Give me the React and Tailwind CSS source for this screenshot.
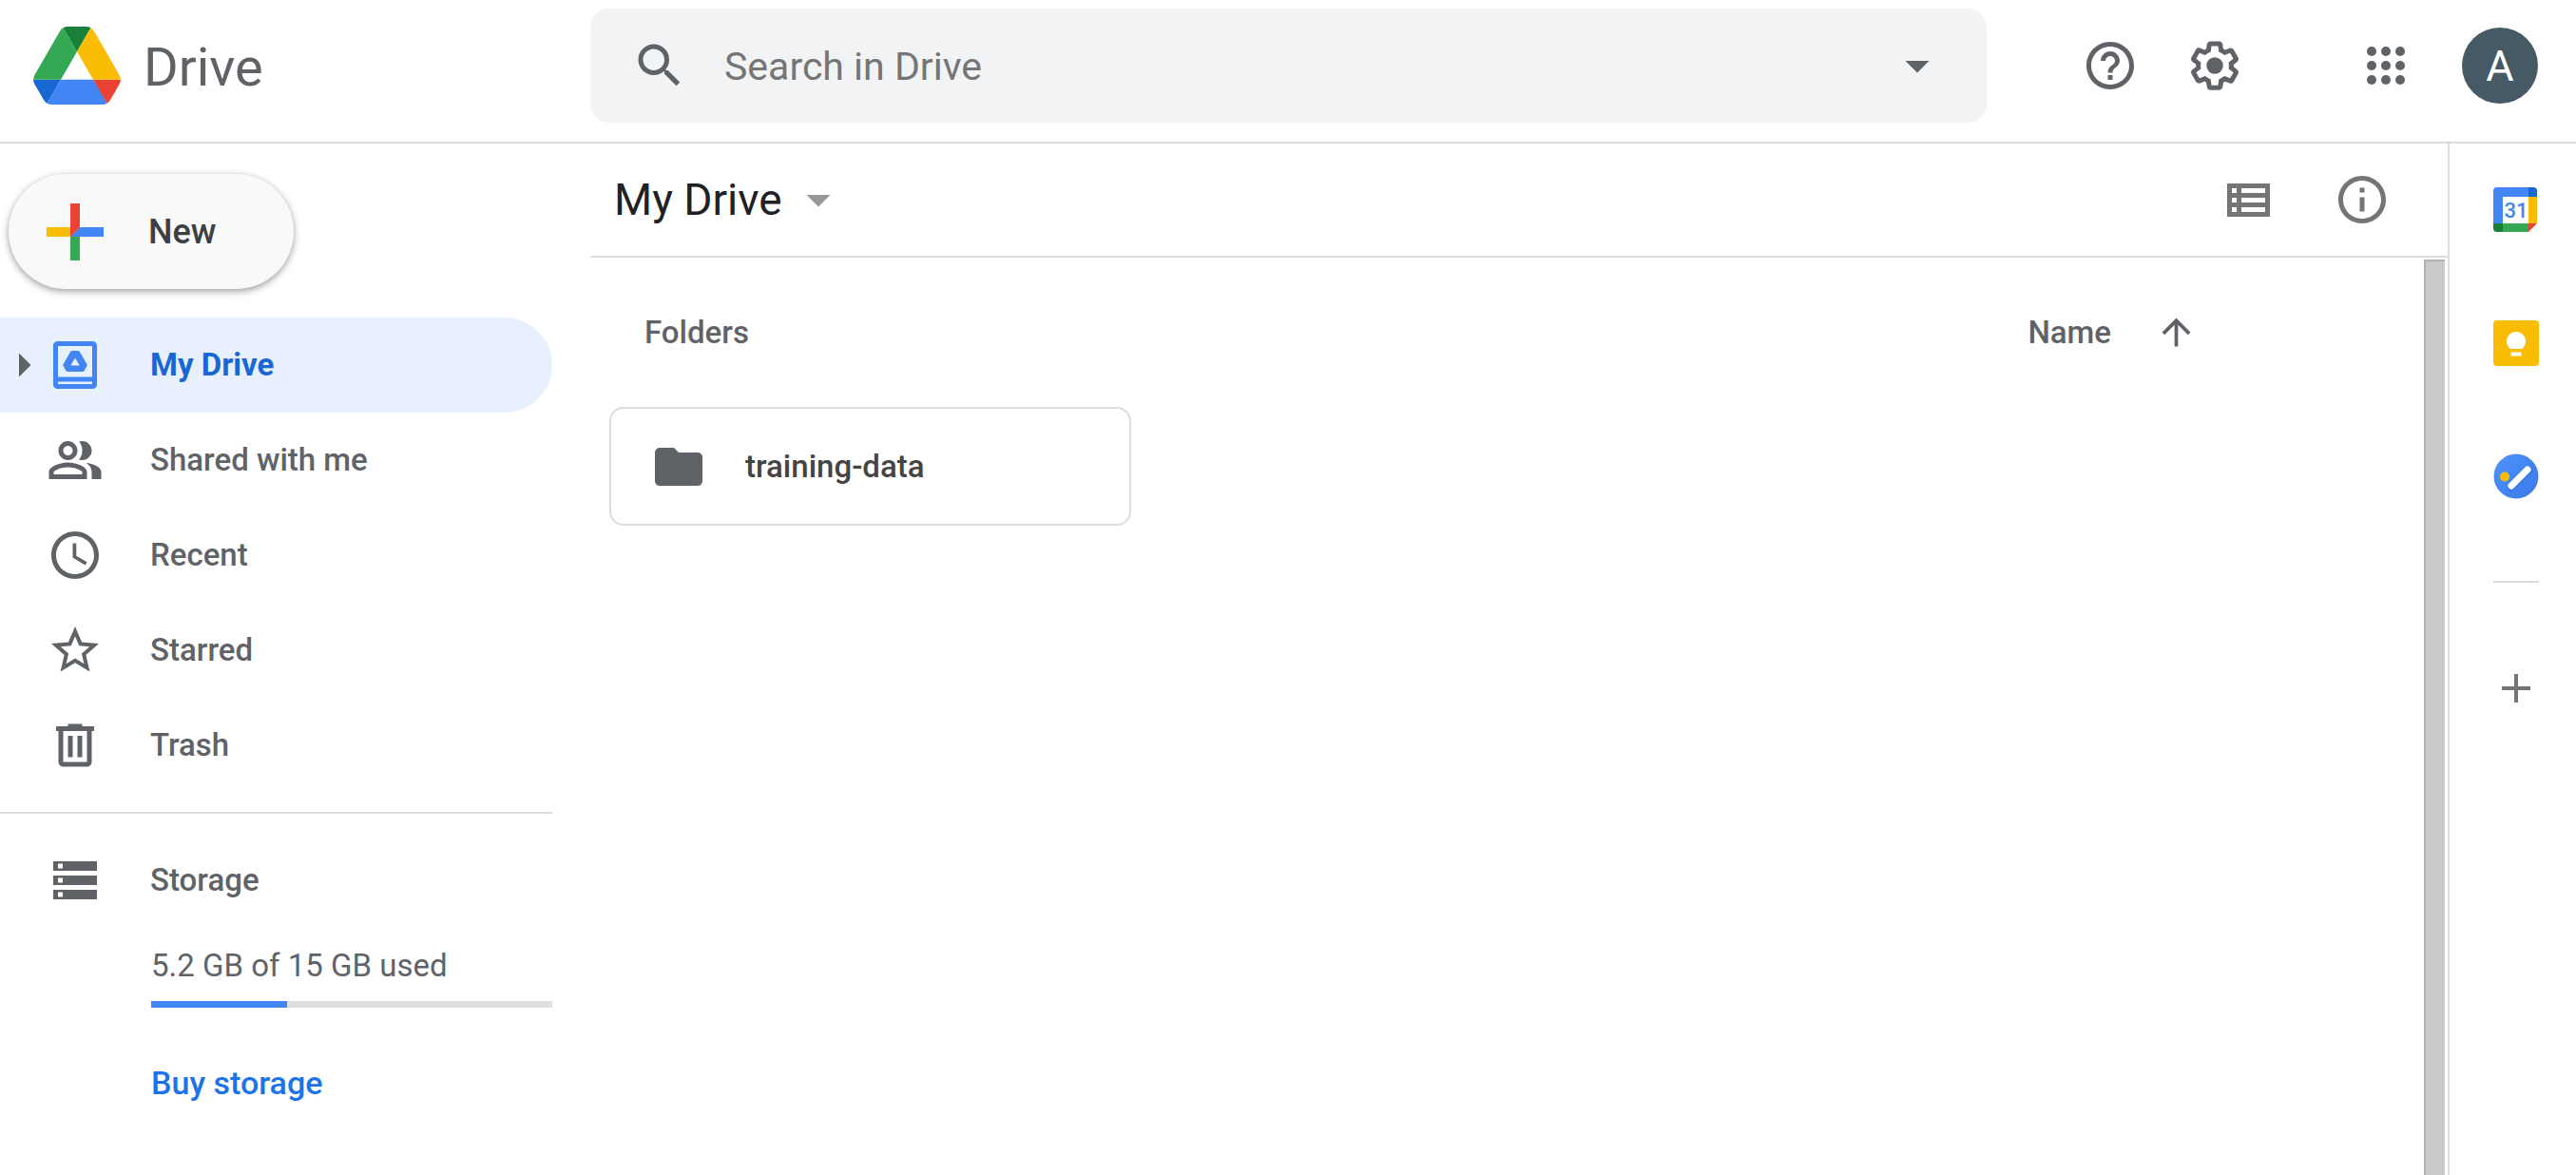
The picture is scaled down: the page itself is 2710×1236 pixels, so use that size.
import { MdSearch, MdHelpOutline, MdArrowDropDown, MdArrowUpward, MdInfoOutline, MdFolder, MdArrowRight } from 'react-icons/md';

function Icon({ children, className = 'size-[60px]', box = '0 0 24 24' }) {
  return (
    <svg viewBox={box} fill="currentColor" aria-hidden="true" className={`block shrink-0 ${className}`}>
      {children}
    </svg>
  );
}

const Logo = () => (
  <svg viewBox="0 0 87.3 78" aria-hidden="true" className="block h-[82px] w-[92px] shrink-0">
    <path d="m6.6 66.85 3.85 6.65c.8 1.4 1.95 2.5 3.3 3.3l13.75-23.8h-27.5c0 1.55.4 3.1 1.2 4.5z" fill="#1967d2" />
    <path d="m43.65 25-13.75-23.8c-1.35.8-2.5 1.9-3.3 3.3l-25.4 44a9.06 9.06 0 0 0 -1.2 4.5h27.5z" fill="#34a853" />
    <path d="m73.55 76.8c1.35-.8 2.5-1.9 3.3-3.3l1.6-2.75 7.65-13.25c.8-1.4 1.2-2.95 1.2-4.5h-27.502l5.852 11.5z" fill="#ea4335" />
    <path d="m43.65 25 13.75-23.8c-1.35-.8-2.9-1.2-4.5-1.2h-18.5c-1.6 0-3.15.45-4.5 1.2z" fill="#188038" />
    <path d="m59.8 53h-32.3l-13.75 23.8c1.35.8 2.9 1.2 4.5 1.2h50.8c1.6 0 3.15-.45 4.5-1.2z" fill="#4285f4" />
    <path d="m73.4 26.5-12.7-22c-.8-1.4-1.95-2.5-3.3-3.3l-13.75 23.8 16.15 28h27.45c0-1.55-.4-3.1-1.2-4.5z" fill="#fbbc04" />
  </svg>
);

const Gear = () => (
  <Icon>
    <path d="M13.85 22.25h-3.7c-.74 0-1.36-.54-1.45-1.27l-.27-1.89c-.27-.14-.53-.29-.79-.46l-1.8.72c-.7.26-1.47-.03-1.81-.65L2.2 15.53c-.35-.66-.2-1.44.36-1.88l1.53-1.19c-.01-.15-.02-.3-.02-.46 0-.15.01-.31.02-.46l-1.52-1.19c-.59-.45-.74-1.26-.37-1.88l1.85-3.19c.34-.62 1.11-.9 1.79-.63l1.81.73c.26-.17.52-.32.78-.46l.27-1.91c.09-.7.71-1.25 1.44-1.25h3.7c.74 0 1.36.54 1.45 1.27l.27 1.89c.27.14.53.29.79.46l1.8-.72c.71-.26 1.48.03 1.82.65l1.84 3.18c.36.66.2 1.44-.36 1.88l-1.52 1.19c.01.15.02.3.02.46s-.01.31-.02.46l1.52 1.19c.56.45.72 1.23.37 1.86l-1.86 3.22c-.34.62-1.11.9-1.8.63l-1.8-.72c-.26.17-.52.32-.78.46l-.27 1.91c-.1.68-.72 1.22-1.46 1.22zm-3.23-2h2.76l.37-2.55.53-.22c.44-.18.88-.44 1.34-.78l.45-.34 2.38.96 1.38-2.4-2.03-1.58.07-.56c.03-.26.06-.51.06-.78s-.03-.53-.06-.78l-.07-.56 2.03-1.58-1.39-2.4-2.39.96-.45-.35c-.42-.32-.87-.58-1.33-.77l-.52-.22-.37-2.55h-2.76l-.37 2.55-.53.21c-.44.19-.88.44-1.34.79l-.45.33-2.38-.95-1.39 2.39 2.03 1.58-.07.56a7 7 0 0 0-.06.79c0 .26.02.53.06.78l.07.56-2.03 1.58 1.38 2.4 2.39-.96.45.35c.43.33.86.58 1.33.77l.53.22.38 2.55z" />
    <circle cx="12" cy="12" r="3.5" />
  </Icon>
);

const AppsGrid = () => (
  <Icon>
    {[6, 12, 18].map((y) => [6, 12, 18].map((x) => <circle key={`${x}-${y}`} cx={x} cy={y} r="2" />))}
  </Icon>
);

const ListView = () => (
  <svg viewBox="0 0 45 35" aria-hidden="true" className="block h-[35px] w-[45px]">
    <path
      fill="currentColor"
      fillRule="evenodd"
      d="M0 0h45v35H0zM5 5v5h5V5zM15 5v5h25V5zM5 15v5h5v-5zM15 15v5h25v-5zM5 25v5h5v-5zM15 25v5h25v-5z"
    />
  </svg>
);

const NewPlus = () => (
  <svg viewBox="0 0 36 36" aria-hidden="true" className="block size-[90px] shrink-0">
    <path fill="#34a853" d="M16 16v14h4V20z" />
    <path fill="#4285f4" d="M30 16H20l-4 4h14z" />
    <path fill="#fbbc05" d="M6 16v4h10l4-4z" />
    <path fill="#ea4335" d="M20 16V6h-4v14z" />
  </svg>
);

const Calendar = () => (
  <svg viewBox="0 0 48 48" aria-hidden="true" className="block size-[48px]">
    <path fill="#fff" d="M10 10h27v28H10z" />
    <path fill="#4285f4" d="M4 0h33v10H10v28H0V4a4 4 0 0 1 4-4z" />
    <path fill="#1967d2" d="M37 0h5a4 4 0 0 1 4 4v6h-9z" />
    <path fill="#fbbc04" d="M37 10h9v28h-9z" />
    <path fill="#34a853" d="M10 38h27v9H10z" />
    <path fill="#188038" d="M0 38h10v9H4a4 4 0 0 1-4-4z" />
    <path fill="#ea4335" d="M37 38h9l-9 9z" />
    <text x="24" y="32" textAnchor="middle" fill="#4285f4" fontSize="22" fontWeight="500" fontFamily="Roboto, sans-serif">31</text>
  </svg>
);

const Keep = () => (
  <svg viewBox="0 0 48 48" aria-hidden="true" className="block size-[48px]">
    <rect width="48" height="48" rx="4" fill="#fbbc04" />
    <path fill="#fff" d="M18 30a10 10 0 1 1 12 0zM18.5 33.5h11v4h-11z" />
  </svg>
);

const Tasks = () => (
  <svg viewBox="0 0 48 48" aria-hidden="true" className="block size-[48px]">
    <defs>
      <linearGradient id="tasksBlue" x1="0" y1="0" x2="1" y2="1">
        <stop offset="0" stopColor="#5394f8" />
        <stop offset="0.5" stopColor="#4285f4" />
        <stop offset="1" stopColor="#3d78e6" />
      </linearGradient>
    </defs>
    <circle cx="24" cy="24" r="23.5" fill="url(#tasksBlue)" />
    <path d="M19 35.500 37 18" stroke="#3367d6" strokeOpacity="0.4" strokeWidth="8" strokeLinecap="round" />
    <path d="M19 34 36 17" stroke="#fff" strokeWidth="7" strokeLinecap="round" />
    <circle cx="12" cy="24.5" r="5" fill="#fbbc04" />
  </svg>
);

const nav = [
  {
    label: 'My Drive',
    active: true,
    icon: (
      <>
        <path fillRule="evenodd" d="M19.200 2H4.800C3.700 2 2.800 2.700 2.800 3.800v16.400c0 1.100.9 1.800 2 1.800h14.400c1.100 0 2-.7 2-1.800V3.800c0-1.100-.9-1.800-2-1.800zm0 18H4.800v-1h14.400v1zm0-3H4.800V4h14.400v13z" />
        <path fillRule="evenodd" d="M10.900 6h2.200q.6 0 .9.500l2.900 5q.3.500 0 1l-1 1.800q-.3.500-.9.500H9q-.6 0-.9-.5l-1-1.800q-.3-.5 0-1l2.900-5q.3-.5.900-.5zM12 9l-1.900 3.200h3.800z" />
      </>
    ),
  },
  {
    label: 'Shared with me',
    icon: (
      <path
        fillRule="evenodd"
        d="M15 8c0-1.420-.5-2.730-1.330-3.760.42-.14.86-.24 1.330-.24 2.210 0 4 1.790 4 4s-1.790 4-4 4c-.43 0-.84-.09-1.230-.21-.03-.01-.06-.02-.1-.03A5.980 5.980 0 0 0 15 8zm1.660 5.130C18.030 14.060 19 15.320 19 17v3h4v-3c0-2.180-3.580-3.470-6.340-3.870zM9 6c1.100 0 2 .9 2 2s-.9 2-2 2-2-.9-2-2 .9-2 2-2m0-2C6.790 4 5 5.790 5 8s1.790 4 4 4 4-1.790 4-4-1.790-4-4-4zM9 15c2.700 0 5.800 1.290 6 2.010V18H3v-.99C3.200 16.290 6.300 15 9 15m0-2c-2.670 0-8 1.340-8 4v3h16v-3c0-2.660-5.330-4-8-4z"
      />
    ),
  },
  {
    label: 'Recent',
    icon: (
      <path d="M11.990 2C6.470 2 2 6.480 2 12s4.470 10 9.990 10C17.520 22 22 17.520 22 12S17.520 2 11.990 2zM12 20c-4.420 0-8-3.580-8-8s3.580-8 8-8 8 3.580 8 8-3.580 8-8 8zm.5-13H11v6l5.250 3.150.75-1.230-4.500-2.670V7z" />
    ),
  },
  {
    label: 'Starred',
    icon: (
      <path d="M22 9.240l-7.190-.62L12 2 9.190 8.630 2 9.240l5.460 4.730L5.820 21 12 17.270 18.180 21l-1.630-7.030L22 9.240zM12 15.400l-3.760 2.270 1-4.280-3.320-2.880 4.380-.38L12 6.100l1.710 4.040 4.380.38-3.320 2.880 1 4.280L12 15.400z" />
    ),
  },
  {
    label: 'Trash',
    icon: (
      <path d="M15 4V3H9v1H4v2h1v13c0 1.100.9 2 2 2h10c1.100 0 2-.9 2-2V6h1V4h-5zm2 15H7V6h10v13zM9 8h2v9H9zm4 0h2v9h-2z" />
    ),
  },
];

function Header() {
  return (
    <header className="flex border-b-2 border-[#dadce0] pt-[9px] pb-5">
      <a href="#" className="flex w-[621px] shrink-0 items-center gap-6 pl-[35px] text-[56px] leading-none">
        <Logo />
        <span className="pt-1">Drive</span>
      </a>
      <form role="search" className="flex h-[120px] min-w-0 flex-1 items-center rounded-[20px] bg-[#f1f3f4] px-[43px]">
        <button type="button" aria-label="Search">
          <MdSearch className="size-[60px]" />
        </button>
        <input
          type="text"
          aria-label="Search in Drive"
          placeholder="Search in Drive"
          className="ml-[38px] min-w-0 flex-1 bg-transparent pt-1 text-[41px] text-[#202124] outline-none placeholder:text-[#757575]"
        />
        <button type="button" aria-label="Search options">
          <MdArrowDropDown className="size-[60px]" />
        </button>
      </form>
      <div className="flex shrink-0 items-center gap-[50px] pr-10 pl-[100px]">
        <button type="button" aria-label="Help">
          <MdHelpOutline className="size-[60px]" />
        </button>
        <button type="button" aria-label="Settings">
          <Gear />
        </button>
        <button type="button" aria-label="Google apps" className="ml-[70px]">
          <AppsGrid />
        </button>
        <button type="button" aria-label="Account" className="size-20 rounded-full bg-[#455a64] text-[45px] leading-none text-white">
          A
        </button>
      </div>
    </header>
  );
}

function Sidebar() {
  return (
    <aside className="w-[621px] shrink-0 pr-10">
      <button
        type="button"
        className="mt-8 ml-[9px] flex h-[121px] w-[300px] items-center gap-8 rounded-full bg-[#f9f9f9] pl-[25px] text-[36px] font-medium text-[#3c4043] shadow-[0_2px_6px_rgba(60,64,67,0.35),0_3px_8px_rgba(60,64,67,0.2)]"
      >
        <NewPlus />
        New
      </button>
      <nav className="mt-[30px] border-b-2 border-[#dadce0] pb-5">
        {nav.map((item) => (
          <a
            key={item.label}
            href="#"
            className={`flex h-[100px] items-center rounded-r-full text-[33px] ${
              item.active ? 'bg-[#e8f0fe] font-bold text-[#1967d2]' : 'font-medium'
            }`}
          >
            <span className="flex w-[49px] justify-center text-[#5f6368]">
              {item.active && <MdArrowRight className="size-[60px] shrink-0" />}
            </span>
            <Icon className={item.active ? 'size-[60px] text-[#4285f4]' : 'size-[60px]'}>{item.icon}</Icon>
            <span className="ml-[49px]">{item.label}</span>
          </a>
        ))}
      </nav>
      <section className="pt-5">
        <a href="#" className="flex h-[100px] items-center pl-[49px] text-[33px] font-medium">
          <Icon>
            <path fillRule="evenodd" d="M2.800 4h18.400v4H2.800zM4.800 5v2h2V5zM2.800 10h18.400v4H2.800zM4.800 11v2h2v-2zM2.800 16h18.400v4H2.800zM4.800 17v2h2v-2z" />
          </Icon>
          <span className="ml-[49px]">Storage</span>
        </a>
        <div className="pl-[159px]">
          <p className="mt-5 text-[33px] leading-[40px]">5.2 GB of 15 GB used</p>
          <div role="progressbar" aria-label="Storage used" aria-valuenow={34} aria-valuemin={0} aria-valuemax={100} className="mt-[17px] h-[7px] bg-[#e0e0e0]">
            <div className="h-full w-[34%] bg-[#4285f4]" />
          </div>
          <a href="#" className="mt-[59px] inline-block text-[34px] leading-[40px] font-medium text-[#1a73e8]">
            Buy storage
          </a>
        </div>
      </section>
    </aside>
  );
}

function Files() {
  return (
    <main className="flex min-w-0 flex-1 flex-col">
      <div className="flex h-[120px] items-center border-b-2 border-[#dadce0] pr-[60px] pl-[25px]">
        <button type="button" className="flex items-center text-[46px] leading-none text-[#202124]">
          My Drive
          <MdArrowDropDown className="ml-2 size-[60px] text-[#96999c]" />
        </button>
        <div className="ml-auto flex items-center gap-[67px] text-[#757575]">
          <button type="button" aria-label="List view">
            <ListView />
          </button>
          <button type="button" aria-label="View details">
            <MdInfoOutline className="size-[60px]" />
          </button>
        </div>
      </div>
      <div className="flex flex-1">
        <div className="min-w-0 flex-1">
          <div className="flex h-[157px] items-center pr-[238px] pl-[57px] text-[33px] font-medium">
            <h2>Folders</h2>
            <button type="button" className="ml-auto flex items-center gap-[46px]">
              Name
              <MdArrowUpward className="size-[45px]" />
            </button>
          </div>
          <button
            type="button"
            className="ml-5 flex h-[125px] w-[549px] items-center gap-10 rounded-[15px] border-2 border-[#dadce0] pl-[41px] text-[33px] font-medium text-[#444]"
          >
            <MdFolder className="size-[60px]" color="#5f6368" />
            training-data
          </button>
        </div>
        <div className="mt-0.5 mr-[3px] w-[22px] border-t-2 border-l-2 border-[#b1b1b1] bg-[#cbcbcb]" />
      </div>
    </main>
  );
}

function Rail() {
  return (
    <aside aria-label="Side panel" className="flex w-[135px] shrink-0 flex-col items-start border-l-2 border-[#dadce0] pt-[46px] pl-[46px]">
      <div className="flex flex-col gap-[92px]">
        <button type="button" aria-label="Calendar"><Calendar /></button>
        <button type="button" aria-label="Keep"><Keep /></button>
        <button type="button" aria-label="Tasks"><Tasks /></button>
      </div>
      <hr className="mt-[86px] w-12 border-t-2 border-[#dadce0]" />
      <button type="button" aria-label="Get add-ons" className="mt-[87px] flex size-12 items-center justify-center text-[#757575]">
        <Icon className="size-[30px]" box="0 0 30 30">
          <path d="M13 0h4v13h13v4H17v13h-4V17H0v-4h13z" />
        </Icon>
      </button>
    </aside>
  );
}

export default function App() {
  return (
    <div className="flex min-h-screen flex-col bg-white font-['Roboto',sans-serif] text-[#5f6368]">
      <Header />
      <div className="flex flex-1">
        <Sidebar />
        <Files />
        <Rail />
      </div>
    </div>
  );
}
